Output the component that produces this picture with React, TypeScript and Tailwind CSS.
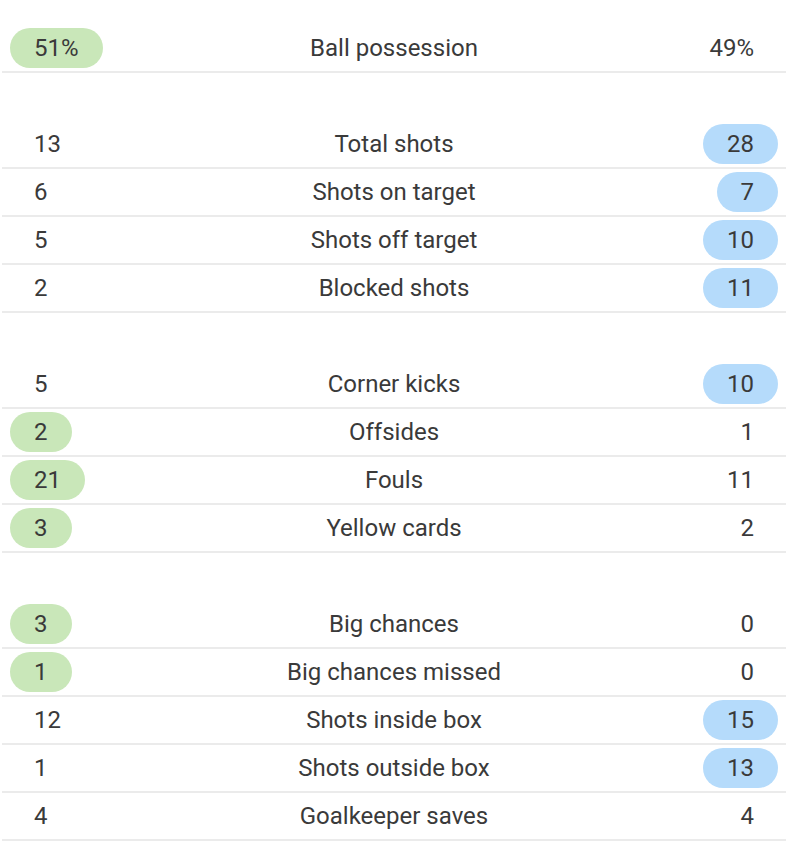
import React from 'react';

type Side = 'home' | 'away' | null;

interface Stat {
  label: string;
  home: string;
  away: string;
  hi: Side;
}

const groups: Stat[][] = [
  [{ label: 'Ball possession', home: '51%', away: '49%', hi: 'home' }],
  [
    { label: 'Total shots', home: '13', away: '28', hi: 'away' },
    { label: 'Shots on target', home: '6', away: '7', hi: 'away' },
    { label: 'Shots off target', home: '5', away: '10', hi: 'away' },
    { label: 'Blocked shots', home: '2', away: '11', hi: 'away' },
  ],
  [
    { label: 'Corner kicks', home: '5', away: '10', hi: 'away' },
    { label: 'Offsides', home: '2', away: '1', hi: 'home' },
    { label: 'Fouls', home: '21', away: '11', hi: 'home' },
    { label: 'Yellow cards', home: '3', away: '2', hi: 'home' },
  ],
  [
    { label: 'Big chances', home: '3', away: '0', hi: 'home' },
    { label: 'Big chances missed', home: '1', away: '0', hi: 'home' },
    { label: 'Shots inside box', home: '12', away: '15', hi: 'away' },
    { label: 'Shots outside box', home: '1', away: '13', hi: 'away' },
    { label: 'Goalkeeper saves', home: '4', away: '4', hi: null },
  ],
];

const Value: React.FC<{ value: string; highlight: boolean; color: 'green' | 'blue' }> = ({
  value,
  highlight,
  color,
}) => {
  const bg = highlight ? (color === 'green' ? 'bg-[#c9e7b9]' : 'bg-[#b5dbfb]') : '';
  return (
    <span className={`inline-flex h-10 items-center rounded-full px-6 ${bg}`}>{value}</span>
  );
};

const StatRow: React.FC<{ stat: Stat }> = ({ stat }) => (
  <div className="grid h-12 grid-cols-[1fr_auto_1fr] items-center border-b-2 border-[#ebebeb] px-2">
    <div className="flex justify-start">
      <Value value={stat.home} highlight={stat.hi === 'home'} color="green" />
    </div>
    <div className="text-center">{stat.label}</div>
    <div className="flex justify-end">
      <Value value={stat.away} highlight={stat.hi === 'away'} color="blue" />
    </div>
  </div>
);

export default function App() {
  return (
    <div
      className="min-h-[862px] w-[788px] bg-white px-[2px] pt-[25px] text-[24px] leading-none text-[#3a3a3a]"
      style={{ fontFamily: 'Roboto, "Liberation Sans", sans-serif' }}
    >
      <div className="flex flex-col gap-12">
        {groups.map((group, i) => (
          <div key={i}>
            {group.map((stat) => (
              <StatRow key={stat.label} stat={stat} />
            ))}
          </div>
        ))}
      </div>
    </div>
  );
}
